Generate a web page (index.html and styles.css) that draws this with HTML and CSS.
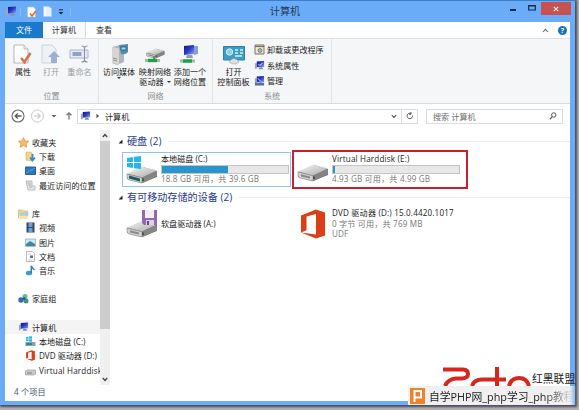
FILE: index.html
```
<!DOCTYPE html>
<html>
  <head>
    <meta charset="utf-8">
    <title>计算机</title>
    <link rel="stylesheet" href="styles.css">
  </head>
  <body>
    <svg class="defs">
      <defs>
        <linearGradient id="metal" x1="0" y1="0" x2="1" y2="1">
          <stop offset="0" stop-color="#f8f8f8"/>
          <stop offset="1" stop-color="#a8a8a8"/>
        </linearGradient>
        <linearGradient id="screen" x1="0" y1="0" x2="1" y2="1">
          <stop offset="0" stop-color="#10107c"/>
          <stop offset="0.5" stop-color="#2c3cc8"/>
          <stop offset="1" stop-color="#88a8f0"/>
        </linearGradient>
        <symbol id="drive" viewBox="0 0 32 18">
          <path d="M1 8 L17 1 L31 5 L31 11 L16 17 L1 13 Z" fill="#777"/>
          <path d="M1 7.5 L16 .8 L31 4.5 L16 11.5 Z" fill="url(#metal)"/>
          <path d="M1 8 L16 11.8 V17 L3 14 Q1 13 1 11 Z" fill="#d2d2d2" stroke="#858585" stroke-width=".6"/>
          <path d="M16 11.8 L31 5 V10 L18 16.6 L16 17 Z" fill="#858585"/>
          <path d="M4 10.3 L13 12.6 V14.6 L4 12.4 Z" fill="#8b8b8b"/>
          <path d="M16 12.5 h2 v2.5 h-2 z" fill="#3c5c3c"/>
        </symbol>
        <symbol id="pc" viewBox="0 0 12 11">
          <path d="M1 3 h2 v6 h-2 z" fill="#a4a4b8"/>
          <path d="M3 1 L11 .5 V7 L3 7.5 Z" fill="url(#screen)"/>
          <path d="M6 7.5 h3 l1 2 h-5 z" fill="#7e8eae"/>
        </symbol>
        <symbol id="office" viewBox="0 0 26 30">
          <path d="M1 6.500 L16 .5 L25 3.5 V26.500 L16 29.500 L1 23.5 L16 25.5 V5 L6.500 7.500 V21.300 L1 23.5 Z" fill="#dc3e15"/>
        </symbol>
        <symbol id="winlogo" viewBox="0 0 14 13">
          <path d="M0 2 L6 1 V6 H0 Z M7 .8 L14 0 V6 H7 Z M0 7 H6 V12 L0 11 Z M7 7 H14 V13 L7 12.2 Z" fill="#25b7e8"/>
        </symbol>
      </defs>
    </svg>

    <div class="window">
      <div class="titlebar">
        <div class="quick">
          <svg class="q-pc" width="12" height="11"><use href="#pc"/></svg>
          <i class="q-sep"></i>
          <svg class="q-prop" width="10" height="12" viewBox="0 0 10 12"><path d="M.5 1 h6 l2 2 v8 h-8 z" fill="#fff" stroke="#b9b9c4" stroke-width=".6"/><path d="M3 7.5 l2 2.5 4-5" fill="none" stroke="#d8693a" stroke-width="1.6"/></svg>
          <svg class="q-new" width="9" height="11" viewBox="0 0 9 11"><path d="M.5 .5 h5 l3 2 v8 h-8 z" fill="#e4effa" stroke="#b6cfe8" stroke-width=".6"/><path d="M2 1 v9" stroke="#fff"/></svg>
          <svg class="q-more" width="6" height="6" viewBox="0 0 6 6"><path d="M1 .8 h4" stroke="#123" stroke-width=".9"/><path d="M.8 3 h4.4 L3 5.400 z" fill="#123"/></svg>
          <i class="q-sep"></i>
        </div>
        <div class="title">计算机</div>
        <div class="controls">
          <svg class="c-min" width="6" height="14" viewBox="0 0 6 14"><path d="M0 9 h6" stroke="#132a4c" stroke-width="2"/></svg>
          <svg class="c-max" width="8" height="14" viewBox="0 0 8 14"><path d="M.7 4.500 h6.6 v4.500 h-6.6 z M.7 5 h6.6" fill="none" stroke="#132a4c" stroke-width="1.2"/></svg>
          <div class="close"><svg width="6" height="6" viewBox="0 0 6 6"><path d="M.8 .8 l4.4 4.4 M5.2 .8 l-4.4 4.4" stroke="#fff" stroke-width="1.1"/></svg></div>
        </div>
      </div>

      <div class="tabs">
        <div class="tab file">文件</div>
        <div class="tab active">计算机</div>
        <div class="tab view">查看</div>
        <svg class="collapse" width="7" height="5" viewBox="0 0 7 5"><path d="M1 4 L3.5 1.3 L6 4" fill="none" stroke="#5b6e8c" stroke-width="1.1"/></svg>
        <div class="help">?</div>
      </div>

      <div class="ribbon">
        <div class="group g-place">
          <div class="tools">
            <div class="tool w-props">
              <svg width="20" height="21" viewBox="0 0 20 21"><path d="M1 1 h10 l4 4 v14 h-14 z" fill="#fff" stroke="#a5a5a9" stroke-width=".8"/><path d="M11 1 v4 h4" fill="#eee" stroke="#a5a5a9" stroke-width=".7"/><path d="M8 14 l3.5 4 6-9" fill="none" stroke="#d3744c" stroke-width="2.6"/></svg>
              <span>属性</span>
            </div>
            <div class="tool dim w-open">
              <svg width="20" height="21" viewBox="0 0 20 21"><path d="M1 1 h10 l4 4 v14 h-14 z" fill="#eef1f7" stroke="#c3cad8" stroke-width=".8"/><path d="M13 7 l6 6 h-3 v6 h-6 v-6 h-3 z" fill="#9eafd0"/></svg>
              <span>打开</span>
            </div>
            <div class="tool dim w-rename">
              <svg width="21" height="21" viewBox="0 0 21 21"><path d="M1 6 h18 v8 h-18 z" fill="#e8ecf4" stroke="#a4afc6" stroke-width=".9"/><path d="M3.5 8 h9 v4 h-9 z" fill="#92a2c4"/><path d="M12.5 2 q3 0 3 2 v12 q0 2 -3 2 M18.5 2 q-3 0 -3 2 M15.500 16 q0 2 3 2" fill="none" stroke="#8792aa" stroke-width="1.1"/></svg>
              <span>重命名</span>
            </div>
          </div>
          <div class="caption">位置</div>
        </div>
        <div class="group g-net">
          <div class="tools">
            <div class="tool w-media">
              <svg width="19" height="21" viewBox="0 0 19 21"><path d="M2 3 l8-2 4 2 v15 l-7 3 -5-2 z" fill="#b5b5b5"/><path d="M2 3 l7 1.500 v16 l-7-2 z" fill="#d6d6d4"/><path d="M3 14 l4 1 M3 16 l4 1" stroke="#777" stroke-width=".7"/><path d="M9 1 l9-1 v8 q-2 3 -7 2 z" fill="#4a8fb5"/><path d="M11 3 h5 v3 h-5 z" fill="#a3d4ee" stroke="#234b68" stroke-width=".7"/></svg>
              <span>访问媒体</span>
              <i class="drop"></i>
            </div>
            <div class="tool w-map">
              <svg width="20" height="21" viewBox="0 0 20 21"><use href="#drive" x="1" y="4" width="19" height="11"/><path d="M0 16.5 h15" stroke="#9dbf9d" stroke-width="3"/><path d="M3 16.500 h9" stroke="#1fa04b" stroke-width="3.400"/><path d="M9 12 v3" stroke="#5c9467" stroke-width="2"/></svg>
              <span>映射网络<br>驱动器<i class="drop in"></i></span>
            </div>
            <div class="tool w-add">
              <svg width="20" height="21" viewBox="0 0 20 21"><path d="M4 2 l10-1 v9 l-10 1 z" fill="url(#screen)"/><path d="M14 2 h4 v8 l-4 1 z" fill="#8ca0d0"/><path d="M7 11 h5 l1 3 h-7 z" fill="#8f9cb4"/><path d="M0 17 h15" stroke="#9dbf9d" stroke-width="3"/><path d="M3 17 h9" stroke="#1fa04b" stroke-width="3.400"/></svg>
              <span>添加一个<br>网络位置</span>
            </div>
          </div>
          <div class="caption">网络</div>
        </div>
        <div class="group g-sys">
          <div class="tools">
            <div class="tool w-panel">
              <svg width="22" height="21" viewBox="0 0 22 21"><path d="M.5 2.500 h21 v13.500 h-21 z" fill="#3d9dc4" stroke="#3580a2"/><circle cx="6.500" cy="8" r="3.200" fill="#8fd0e8" stroke="#d5eff8"/><path d="M12 6 h3 M17 6 h3 M12 9 h3 M17 9 h3 M12 12 h7" stroke="#d5eff8" stroke-width="1.300"/><path d="M6 18 q5-7 10 0 q-5 4 -10 0" fill="#dedede" stroke="#a2a2a2" stroke-width=".6"/></svg>
              <span>打开<br>控制面板</span>
            </div>
            <div class="links">
              <div class="link"><svg width="11" height="11" viewBox="0 0 11 11"><path d="M1 1 h9 v9 h-9 z" fill="#efe9d4" stroke="#77736a"/><path d="M1 2.500 h9" stroke="#77736a" stroke-width="1.200"/><circle cx="6" cy="6.500" r="2" fill="#9fb6a0" stroke="#66736a" stroke-width=".7"/></svg>卸载或更改程序</div>
              <div class="link"><svg width="11" height="11" viewBox="0 0 12 11"><use href="#pc"/><path d="M5 4 l1.500 1.500 3-3" fill="none" stroke="#fff"/></svg>系统属性</div>
              <div class="link"><svg width="11" height="11" viewBox="0 0 12 11"><use href="#pc"/><path d="M1 8 h10 v3 h-10 z" fill="#5a7392"/><path d="M4 3 l4 4" stroke="#d7e4f4"/></svg>管理</div>
            </div>
          </div>
          <div class="caption">系统</div>
        </div>
      </div>

      <div class="nav">
        <svg class="arrows" width="72" height="16" viewBox="0 0 72 16">
          <circle cx="13" cy="8" r="6" fill="#fff" stroke="#686868" stroke-width="1.100"/>
          <path d="M16.500 8 h-6 M12.800 5.400 L10.200 8 l2.600 2.600" fill="none" stroke="#555" stroke-width="1.300"/>
          <circle cx="32.500" cy="8" r="6" fill="#fff" stroke="#c9c9c9"/>
          <path d="M29 8 h6 M32.700 5.400 L35.300 8 l-2.600 2.600" fill="none" stroke="#c9c9c9" stroke-width="1.200"/>
          <path d="M46.500 7 h5 l-2.500 2.500 z" fill="#666"/>
          <path d="M64 11.500 v-6.500 M61.500 7.300 L64 4.800 l2.500 2.500" fill="none" stroke="#777" stroke-width="1.300"/>
        </svg>
        <div class="address">
          <svg width="11" height="10" viewBox="0 0 12 11"><use href="#pc"/></svg>
          <svg class="crumb" width="4" height="6" viewBox="0 0 4 6"><path d="M.5 .8 L3 3 L.5 5.200 z" fill="#444"/></svg>
          <span>计算机</span>
          <svg class="chev" width="6" height="5" viewBox="0 0 6 5"><path d="M.8 1.200 L3 3.500 L5.200 1.200" fill="none" stroke="#555" stroke-width="1.200"/></svg>
          <div class="refresh"><svg width="8" height="8" viewBox="0 0 8 8"><path d="M6.500 3.500 a2.700 2.700 0 1 1 -1.500 -2 M5 0 v2.200 h-2" fill="none" stroke="#555" stroke-width="1"/></svg></div>
        </div>
        <div class="search">
          <span>搜索 计算机</span>
          <svg width="8" height="8" viewBox="0 0 8 8"><circle cx="4.800" cy="3" r="2.200" fill="none" stroke="#555"/><path d="M3.200 4.700 L.8 7.300" stroke="#555" stroke-width="1.200"/></svg>
        </div>
      </div>

      <div class="body">
        <div class="tree">
          <div class="node"><svg width="11" height="11" viewBox="0 0 11 11"><path d="M5.500 .5 L7 4 L10.700 4.300 L8 6.700 L8.800 10.300 L5.500 8.400 L2.200 10.300 L3 6.700 L.3 4.300 L4 4 Z" fill="#f6bd62" stroke="#d98e3c" stroke-width=".7"/></svg>收藏夹</div>
          <div class="node sub"><svg width="11" height="11" viewBox="0 0 11 11"><path d="M1 1 h4 l2 1 v8 l-6-1 z" fill="#f2d78a" stroke="#cdb067" stroke-width=".6"/><path d="M7.500 3 v5 M5 6.500 L7.500 9.500 L10 6.500" fill="none" stroke="#3d8ac6" stroke-width="1.800"/></svg>下载</div>
          <div class="node sub"><svg width="11" height="11" viewBox="0 0 11 11"><path d="M.5 2 h10 v7.500 h-10 z" fill="#2d76c2" stroke="#2a5f9c"/><path d="M1 8 L10 3" stroke="#5e9fdc"/></svg>桌面</div>
          <div class="node sub"><svg width="11" height="11" viewBox="0 0 11 11"><path d="M1 1 h6 v5 h3 v4 h-7 z" fill="#e6e6e9" stroke="#a4a4aa" stroke-width=".7"/><path d="M2.500 3 h3 M3 5 h3 M4 7 h3" stroke="#92929a" stroke-width=".7"/></svg>最近访问的位置</div>
          <div class="node"></div>
          <div class="node"><svg width="11" height="11" viewBox="0 0 11 11"><path d="M.5 2 h4 l1 1 h4 v7 h-9 z" fill="#f1d78c" stroke="#cdb067" stroke-width=".7"/><path d="M2 4.500 h8.500 v3 h-8.500 z" fill="#9fd3dc"/><path d="M1 8 h9 v2 h-9 z" fill="#f6e3a8"/></svg>库</div>
          <div class="node sub"><svg width="11" height="11" viewBox="0 0 11 11"><path d="M1.500 .5 h8 v10 h-8 z" fill="#39475e"/><path d="M3.500 1 h4 v4 h-4 z M3.500 6 h4 v4 h-4 z" fill="#6d9fd8"/></svg>视频</div>
          <div class="node sub"><svg width="11" height="11" viewBox="0 0 11 11"><path d="M.5 2 h10 v7.500 h-10 z" fill="#cfe9f5" stroke="#97b3bf" stroke-width=".8"/><path d="M1 7 l4-3 l5 3 v2 h-9 z" fill="#3f88a2"/></svg>图片</div>
          <div class="node sub"><svg width="11" height="11" viewBox="0 0 11 11"><path d="M1.500 .5 h6 l2 2 v8 h-8 z" fill="#fafafa" stroke="#a9a9ae" stroke-width=".8"/><path d="M5 4.500 h3 v2.500 h-3 z" fill="#5d7188"/><path d="M3 3 h3 M3 9 h5" stroke="#bbb" stroke-width=".6"/></svg>文档</div>
          <div class="node sub"><svg width="11" height="11" viewBox="0 0 11 11"><ellipse cx="4" cy="8" rx="3.200" ry="2.300" fill="#3e9ccb"/><path d="M6.300 8 V.8 Q7 3 9.500 5" fill="none" stroke="#2e7fae" stroke-width="1.500"/></svg>音乐</div>
          <div class="node"></div>
          <div class="node"><svg width="11" height="11" viewBox="0 0 11 11"><circle cx="3" cy="7" r="2.700" fill="#2c6fae"/><circle cx="7" cy="3.500" r="2.600" fill="#69b9a4"/><circle cx="8" cy="8" r="2.500" fill="#3b9484"/><circle cx="6" cy="5.500" r="1.300" fill="#234b82"/></svg>家庭组</div>
          <div class="node"></div>
          <div class="node selected"><svg width="11" height="10" viewBox="0 0 12 11"><use href="#pc"/></svg>计算机</div>
          <div class="node sub"><svg width="11" height="11" viewBox="0 0 11 11"><use href="#winlogo" x="1" y="0" width="6" height="6"/><path d="M.5 6 h10 v4 h-10 z" fill="#80a8a8"/><path d="M1 8 h6" stroke="#33746e" stroke-width="1.500"/></svg>本地磁盘 (C:)</div>
          <div class="node sub"><svg width="11" height="11" viewBox="0 0 26 30"><use href="#office"/></svg>DVD 驱动器 (D:)</div>
          <div class="node sub wide"><svg width="11" height="11" viewBox="0 0 11 11"><path d="M.5 6 l2-1 h8 v4 l-2 1 h-8 z" fill="#c9c9c9" stroke="#909090" stroke-width=".6"/><path d="M2 8 h5" stroke="#7c7c7c"/></svg>Virtual Harddisk</div>
        </div>
        <div class="scroll">
          <svg width="6" height="5" viewBox="0 0 6 5"><path d="M.8 4 L3 1.500 L5.200 4" fill="none" stroke="#444" stroke-width="1.300"/></svg>
          <div class="thumb"></div>
          <svg width="6" height="5" viewBox="0 0 6 5"><path d="M.8 1 L3 3.500 L5.200 1" fill="none" stroke="#444" stroke-width="1.300"/></svg>
        </div>
        <div class="files">
          <div class="heading"><svg width="5" height="5" viewBox="0 0 5 5"><path d="M4.500 .5 V4.500 H.5 Z" fill="#222"/></svg>硬盘 (2)<hr></div>
          <div class="row">
            <div class="tile focus">
              <svg class="icon" width="32" height="30" viewBox="0 0 32 30"><use href="#drive" x="0" y="11" width="32" height="18"/><path d="M3 20.500 l11 3 v3 l-11-3 z" fill="#1d5f5d"/><use href="#winlogo" x="1" y="1" width="14" height="13"/></svg>
              <div class="info">
                <div class="name">本地磁盘 (C:)</div>
                <div class="bar"><div class="fill" style="width: 52%"></div></div>
                <div class="meta">18.8 GB 可用，共 39.6 GB</div>
              </div>
            </div>
            <div class="tile marked">
              <svg class="icon" width="32" height="30" viewBox="0 0 32 30"><use href="#drive" x="0" y="9" width="32" height="18"/></svg>
              <div class="info">
                <div class="name wide">Virtual Harddisk (E:)</div>
                <div class="bar"><div class="fill" style="width: 1.2%"></div></div>
                <div class="meta">4.93 GB 可用，共 4.99 GB</div>
              </div>
            </div>
          </div>
          <div class="heading second"><svg width="5" height="5" viewBox="0 0 5 5"><path d="M4.500 .5 V4.500 H.5 Z" fill="#222"/></svg>有可移动存储的设备 (2)<hr></div>
          <div class="row removable">
            <div class="tile">
              <svg class="icon" width="32" height="30" viewBox="0 0 32 30"><use href="#drive" x="0" y="11" width="32" height="18"/><path d="M16 1 h15 v15 h-13 l-2-2 z" fill="#9468b0"/><path d="M19 1 h9 v8 h-9 z" fill="#f3eef7"/><path d="M20 11 h8 v5 h-8 z" fill="#ddd3e6"/><path d="M21 12 h2 v4 h-2 z" fill="#6c4688"/></svg>
              <div class="info"><div class="name">软盘驱动器 (A:)</div></div>
            </div>
            <div class="tile dvd">
              <svg class="icon" width="26" height="30"><use href="#office"/></svg>
              <div class="info">
                <div class="name wide">DVD 驱动器 (D:) 15.0.4420.1017</div>
                <div class="meta">0 字节 可用，共 769 MB</div>
                <div class="meta">UDF</div>
              </div>
            </div>
          </div>
        </div>
      </div>

      <div class="status">4 个项目</div>
    </div>

    <!-- site badge laid over the corner of the window -->
    <div class="brand">
      <svg width="90" height="20" viewBox="0 0 90 20"><path d="M1 3.500 H21 Q26 3.500 26 8 Q26 12 20 12.500 H14 Q6 13 3 20 M30 20 Q32 13.500 40 13.500 H64 M55 1 V20 M67 20 Q69 12 77 12 Q85 12 87 20" fill="none" stroke="#d7261e" stroke-width="4"/></svg>
      <span>红黑联盟</span>
    </div>
    <div class="badge">
      <div class="badge-logo"><svg width="15" height="16" viewBox="0 0 15 16"><path d="M4.500 14 V3 H11 V9.500 H5" fill="none" stroke="#fff" stroke-width="2"/></svg></div>
      <span>自学PHP网_php学习_php教程</span>
    </div>
  </body>
</html>
```
FILE: styles.css
```
html, body {
  margin: 0;
  height: 410px;
  overflow: hidden;
}

body {
  position: relative;
  background: #b5b1b0;
  font-family: "Open Sans", "Noto Sans CJK SC", sans-serif;
  font-size: 8.1px;
  color: #222;
}

svg {
  display: block;
  flex: none;
}

.defs {
  position: absolute;
  width: 0;
  height: 0;
}

.window {
  box-sizing: border-box;
  display: flex;
  flex-direction: column;
  width: 575px;
  height: 405px;
  padding: 0 5px 4px;
  border-top: 1px solid #3c7fc9;
  background: #6bacf8;
  box-shadow: 1px 1px 2px 1px #444c5a;
}

/* title bar */

.titlebar {
  display: flex;
  justify-content: space-between;
  height: 21px;
}

.quick {
  display: flex;
  align-items: center;
  width: 200px;
}

.q-pc { margin-right: 3px; }
.q-prop { margin: 0 6px 0 6px; }
.q-new { margin-right: 6px; }
.q-more { margin-right: 6px; }

.q-sep {
  width: 1px;
  height: 8px;
  background: #8fb9e6;
}

.title {
  width: 160px;
  margin-right: 6px;
  text-align: center;
  font-size: 10.2px;
  line-height: 21px;
  color: #233b5a;
}

.controls {
  display: flex;
  justify-content: flex-end;
  width: 200px;
  margin-right: -1px;
}

.c-min { margin-right: 12px; }
.c-max { margin-right: 5px; }

.close {
  display: flex;
  align-items: center;
  justify-content: center;
  width: 30px;
  height: 13px;
  margin-top: 1px;
  background: #c75050;
}

/* tabs */

.tabs {
  display: flex;
  align-items: center;
  height: 16px;
  background: #fff;
}

.tab {
  width: 38px;
  line-height: 16px;
  text-align: center;
  color: #333;
}

.tab.file {
  color: #fff;
  background: #1979ca;
}

.tab.active {
  width: 42px;
  border-right: 1px solid #dadbdc;
  background: #f8f9fa;
}

.tab.view { width: 36px; }

.collapse { margin-left: auto; }

.help {
  width: 9px;
  height: 9px;
  margin: 0 3px 0 9px;
  border-radius: 50%;
  font-size: 7px;
  font-weight: bold;
  line-height: 9px;
  text-align: center;
  color: #fff;
  background: #1c73b4;
}

/* ribbon */

.ribbon {
  display: flex;
  height: 64px;
  border-top: 1px solid #e0e1e2;
  border-bottom: 1px solid #d9dadb;
  background: #f5f6f7;
}

.group {
  box-sizing: border-box;
  display: flex;
  flex-direction: column;
  justify-content: space-between;
  border-right: 1px solid #e2e3e4;
}

.g-place { width: 94px; }
.g-net { width: 114px; }
.g-sys { width: 119px; }

.tools {
  display: flex;
  height: 45px;
  padding-top: 5px;
}

.tool {
  display: flex;
  flex-direction: column;
  align-items: center;
  line-height: 10px;
  text-align: center;
  white-space: nowrap;
}

.tool span { margin-top: 2px; }
.tool.dim { color: #9a9da3; }

.w-props { width: 36px; }
.w-open { width: 20px; }
.w-rename { width: 37px; }
.w-media { width: 40px; }
.w-map { width: 32px; }
.w-add { width: 38px; }
.w-panel { width: 41px; }

.drop {
  border: 2px solid transparent;
  border-top-color: #333;
  border-bottom: 0;
}

.drop.in {
  display: inline-block;
  margin: 0 0 2px 3px;
}

.link {
  display: flex;
  align-items: center;
  gap: 2px;
  height: 11px;
  margin-bottom: 4.5px;
  white-space: nowrap;
}

.caption {
  height: 13px;
  line-height: 12px;
  text-align: center;
  color: #8d8f92;
}

/* address bar */

.nav {
  display: flex;
  align-items: center;
  height: 24px;
  background: #fff;
}

.address, .search {
  box-sizing: border-box;
  display: flex;
  align-items: center;
  height: 15px;
  border: 1px solid #dcdcdc;
}

.address {
  width: 341px;
  padding-left: 2px;
}

.crumb { margin: 0 5px; }
.chev { margin: 0 4px 0 auto; }

.refresh {
  display: flex;
  align-items: center;
  justify-content: center;
  width: 15px;
  height: 13px;
  border-left: 1px solid #dcdcdc;
}

.search {
  justify-content: space-between;
  width: 137px;
  margin-left: 8px;
  padding: 0 5px 0 6px;
  color: #6d6d6d;
}

/* folder tree */

.body {
  display: flex;
  height: 257px;
  background: #fff;
}

.tree {
  width: 95px;
  padding-top: 7.4px;
  overflow: hidden;
}

.node {
  box-sizing: border-box;
  display: flex;
  align-items: center;
  gap: 3px;
  height: 14.22px;
  padding-left: 13px;
  white-space: nowrap;
}

.node.sub { padding-left: 20px; }
.node.selected { background: #f4f4f4; }

.wide { letter-spacing: 0.17px; }

.scroll {
  display: flex;
  flex-direction: column;
  align-items: center;
  justify-content: space-between;
  width: 10px;
  height: 249px;
  margin-top: 2px;
  padding: 3px 0;
  background: #f0f0f0;
}

.thumb {
  width: 10px;
  height: 188px;
  margin: 3px 0 auto;
  background: #cdcdcd;
}

/* drives */

.files {
  flex: 1;
  padding: 6px 0 0 8px;
}

.heading {
  display: flex;
  align-items: center;
  height: 15px;
  font-size: 10.1px;
  line-height: 15px;
  white-space: nowrap;
  color: #2a3c8c;
}

.heading svg { margin-right: 4px; }

.heading hr {
  flex: 1;
  height: 1px;
  margin: 0 0 0 6px;
  border: 0;
  background: #e9edf3;
}

.row {
  display: flex;
  align-items: center;
  height: 41px;
  padding-left: 4px;
}

.tile {
  box-sizing: border-box;
  display: flex;
  align-items: center;
  width: 169px;
  height: 35px;
  padding-left: 3px;
  border: 1px solid transparent;
  white-space: nowrap;
}

.tile.focus {
  border-color: #8fc6dc;
}

.tile.marked {
  width: 176px;
  height: 39px;
  margin-left: 1px;
  border: 2px solid #c9202f;
}

.icon { margin-right: 3px; }

.info {
  width: 128px;
  line-height: 10.7px;
}

.bar {
  box-sizing: border-box;
  height: 9px;
  border: 1px solid #c4c4c4;
  background: #e7e7e7;
}

.fill {
  height: 7px;
  background: #2a95cd;
}

.meta {
  letter-spacing: 0.16px;
  color: #777;
}

.removable { height: 38px; }

.dvd {
  margin-left: 4px;
  padding-left: 4px;
}

.dvd .icon { margin-right: 6px; }

.status {
  height: 16px;
  padding-left: 9px;
  line-height: 14px;
  letter-spacing: 0.15px;
  color: #3a5578;
  background: #fff;
}

/* corner badge */

.brand {
  position: absolute;
  left: 442px;
  top: 366px;
  display: flex;
  width: 135px;
  height: 20px;
}

.brand span {
  margin-top: 6px;
  font-size: 10.8px;
  line-height: 14px;
  white-space: nowrap;
  color: #222;
}

.badge {
  position: absolute;
  left: 408px;
  top: 386px;
  display: flex;
  align-items: center;
  width: 171px;
  height: 19px;
  background: linear-gradient(90deg, #f0f0f0 162px, transparent 168px);
}

.badge-logo {
  margin: 0 4px 0 2px;
  background: #f08228;
}

.badge span {
  font-size: 10.8px;
  white-space: nowrap;
  color: #222;
  -webkit-mask-image: linear-gradient(90deg, #000 115px, transparent 144px);
  mask-image: linear-gradient(90deg, #000 115px, transparent 144px);
}
```
